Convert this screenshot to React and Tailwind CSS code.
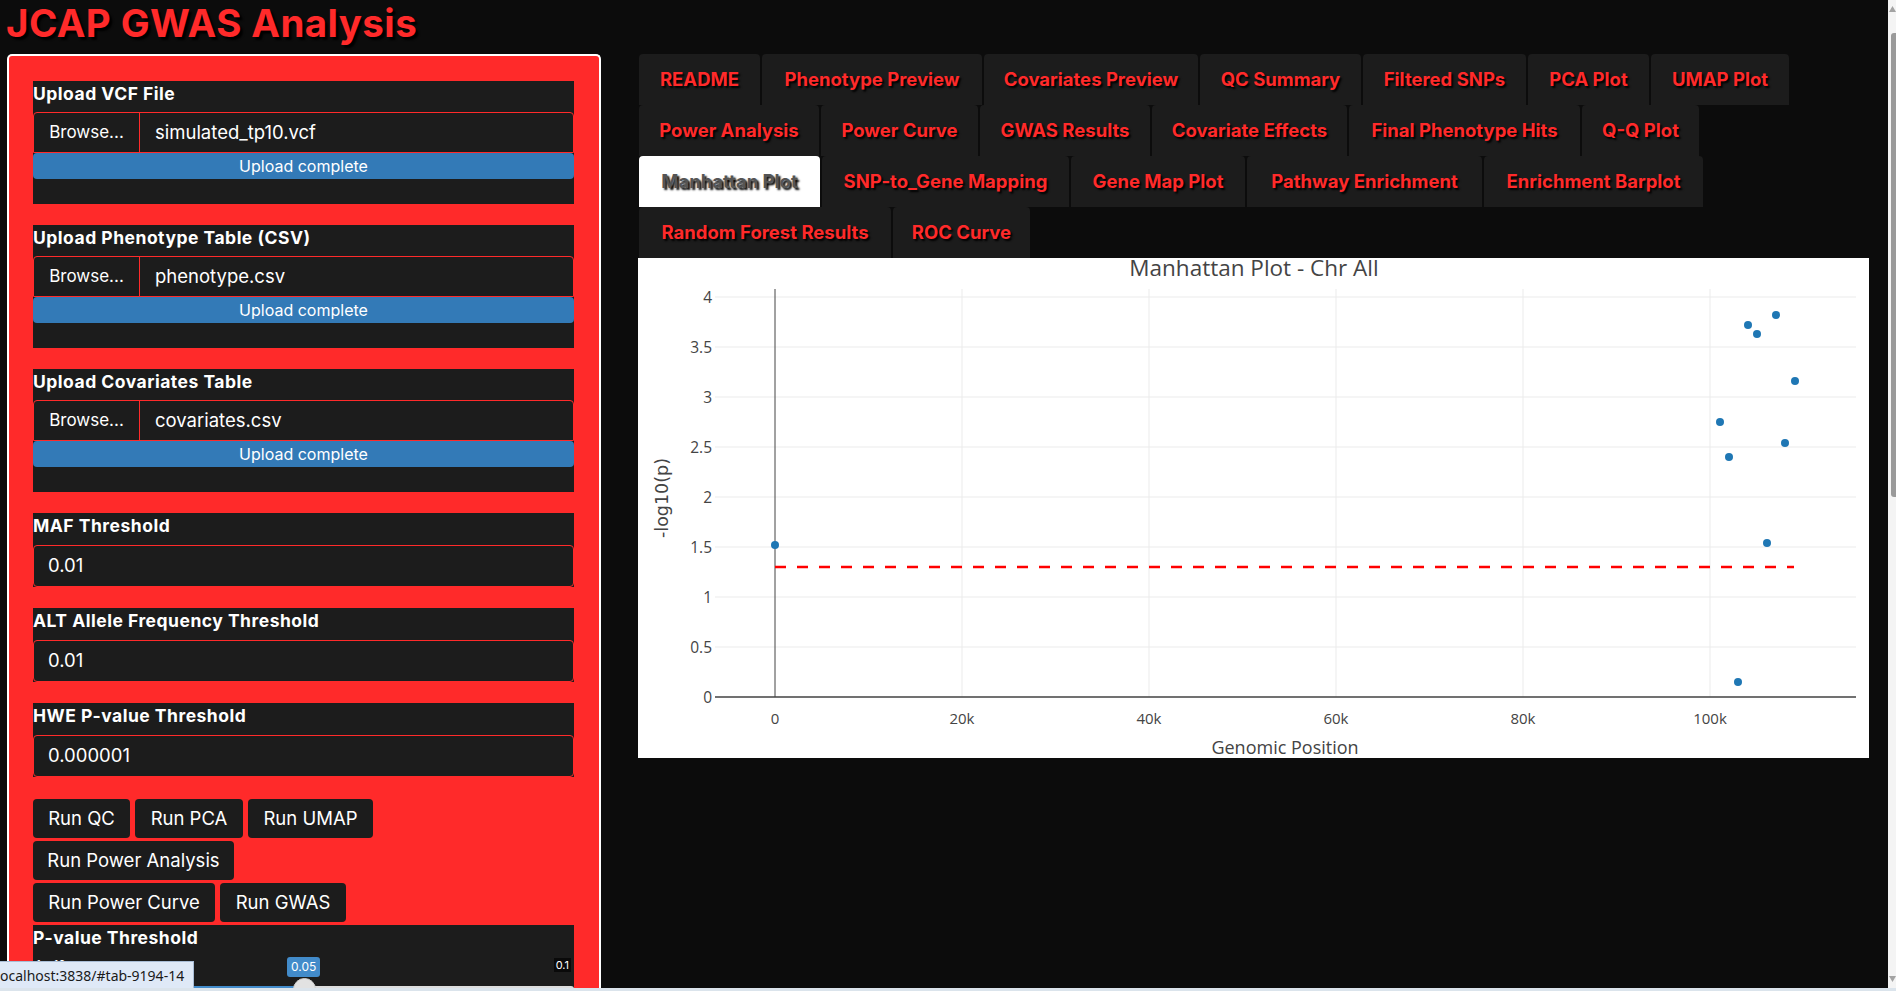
import React from 'react';

const uploads = [
  { label: 'Upload VCF File', file: 'simulated_tp10.vcf' },
  { label: 'Upload Phenotype Table (CSV)', file: 'phenotype.csv' },
  { label: 'Upload Covariates Table', file: 'covariates.csv' },
];

const thresholds = [
  { label: 'MAF Threshold', value: '0.01' },
  { label: 'ALT Allele Frequency Threshold', value: '0.01' },
  { label: 'HWE P-value Threshold', value: '0.000001' },
];

const buttonRows = [
  [['Run QC', 'w-[97px]'], ['Run PCA', 'w-[108px]'], ['Run UMAP', 'w-[125px]']],
  [['Run Power Analysis', 'w-[201px]']],
  [['Run Power Curve', 'w-[182px]'], ['Run GWAS', 'w-[126px]']],
];

const tabRows = [
  [['README', 'w-[121px]'], ['Phenotype Preview', 'w-[220px]'], ['Covariates Preview', 'w-[214px]'], ['QC Summary', 'w-[161px]'], ['Filtered SNPs', 'w-[163px]'], ['PCA Plot', 'w-[121px]'], ['UMAP Plot', 'w-[138px]']],
  [['Power Analysis', 'w-[180px]'], ['Power Curve', 'w-[157px]'], ['GWAS Results', 'w-[170px]'], ['Covariate Effects', 'w-[195px]'], ['Final Phenotype Hits', 'w-[231px]'], ['Q-Q Plot', 'w-[117px]']],
  [['Manhattan Plot', 'w-[181px]'], ['SNP-to_Gene Mapping', 'w-[247px]'], ['Gene Map Plot', 'w-[174px]'], ['Pathway Enrichment', 'w-[235px]'], ['Enrichment Barplot', 'w-[219px]']],
  [['Random Forest Results', 'w-[252px]'], ['ROC Curve', 'w-[137px]']],
];

// plot coords: x0 = 137 px at position 0, 187 px per 20k; y0 = 439 px at 0, 100 px per unit
const px = (k) => 137 + k * 9.35;
const py = (v) => 439 - v * 100;

const points = [
  [137, 287], [1110, 67], [1119, 76], [1138, 57], [1157, 123],
  [1082, 164], [1091, 199], [1147, 185], [1129, 285], [1100, 424],
];

const ManhattanPlot = () => {
  const yTicks = [0, 0.5, 1, 1.5, 2, 2.5, 3, 3.5, 4];
  const xTicks = [0, 20, 40, 60, 80, 100];
  const font = "'Open Sans', Verdana, Arial, sans-serif";
  return (
    <div className="w-[1231px] h-[500px] bg-white">
      <svg width="1231" height="500" viewBox="0 0 1231 500">
        {yTicks.map((v) => (
          <line key={'gy' + v} x1="77" x2="1218" y1={py(v)} y2={py(v)} stroke="#ebebeb" strokeWidth="1" />
        ))}
        {xTicks.slice(1).map((k) => (
          <line key={'gx' + k} x1={px(k)} x2={px(k)} y1="31" y2="439" stroke="#ebebeb" strokeWidth="1" />
        ))}
        <line x1="137" x2="137" y1="31" y2="439" stroke="#444" strokeWidth="1" />
        <line x1="77" x2="1218" y1="439" y2="439" stroke="#444" strokeWidth="1.5" />
        <line x1="137" x2="1156" y1={py(1.3)} y2={py(1.3)} stroke="#ff0000" strokeWidth="2.5" strokeDasharray="11 11" />
        {points.map(([x, y], i) => (
          <circle key={i} cx={x} cy={y} r="4" fill="#1f77b4" />
        ))}
        {yTicks.map((v) => (
          <text key={'ty' + v} x="74" y={py(v) + 5.5} textAnchor="end" fontFamily={font} fontSize="15.5" fill="#444">
            {v}
          </text>
        ))}
        {xTicks.map((k) => (
          <text key={'tx' + k} x={px(k)} y="466" textAnchor="middle" fontFamily={font} fontSize="15" fill="#444">
            {k === 0 ? '0' : k + 'k'}
          </text>
        ))}
        <text x="616" y="18" textAnchor="middle" fontFamily={font} fontSize="22.5" fill="#444">
          Manhattan Plot - Chr All
        </text>
        <text x="647" y="496" textAnchor="middle" fontFamily={font} fontSize="18" fill="#444">
          Genomic Position
        </text>
        <text x="0" y="0" transform="translate(30 240) rotate(-90)" textAnchor="middle" fontFamily="'DejaVu Sans', Verdana, sans-serif" fontSize="17.5" fill="#444">
          -log10(p)
        </text>
      </svg>
    </div>
  );
};

const Label = ({ children, gap = 'mb-[6px]' }) => (
  <div className={`h-[25px] leading-[25px] text-[17.5px] tracking-[0.5px] font-bold text-white whitespace-nowrap ${gap}`}>{children}</div>
);

const App = () => {
  return (
    <div className="relative h-[991px] overflow-hidden bg-[#0c0c0c] font-[Inter,sans-serif]">
      <div className="h-[54px] pl-[6px] pt-[3px]">
        <h1 className="text-[38.5px] leading-[40px] font-bold text-[#ff2a2a] tracking-[0.4px] [text-shadow:3px_3px_2px_#000]">
          JCAP GWAS Analysis
        </h1>
      </div>

      <div className="flex items-start">
        {/* Sidebar */}
        <aside className="ml-[7px] w-[594px] h-[960px] bg-[#ff2a2a] border-2 border-b-0 border-white rounded-t-[5px] pl-[24px] pr-[25px] pt-[25px] flex flex-col">
          <div className="flex flex-col gap-[21px]">
            {uploads.map((u) => (
              <div key={u.label} className="bg-[#1c1c1c] pb-[25px]">
                <Label>{u.label}</Label>
                <div className="flex h-[41px] border border-[#ff2a2a] rounded-t-[4px] text-white">
                  <div className="w-[106px] flex items-center justify-center border-r border-[#ff2a2a] text-[17px]">Browse...</div>
                  <div className="flex items-center pl-[15px] text-[18.5px]">{u.file}</div>
                </div>
                <div className="h-[26px] bg-[#337ab7] rounded-[4px] flex items-center justify-center text-white text-[16px]">
                  Upload complete
                </div>
              </div>
            ))}
            {thresholds.map((t) => (
              <div key={t.label} className="bg-[#1c1c1c]">
                <Label gap="mb-[7px]">{t.label}</Label>
                <div className="h-[42px] border border-[#ff2a2a] rounded-[4px] flex items-center pl-[14px] text-white text-[18.5px]">
                  {t.value}
                </div>
              </div>
            ))}
          </div>

          <div className="mt-[22px] flex flex-col gap-[3px]">
            {buttonRows.map((row, i) => (
              <div key={i} className="flex gap-[5px]">
                {row.map(([name, w]) => (
                  <button key={name} className={`${w} h-[39px] bg-[#1c1c1c] rounded-[4px] text-white text-[18.5px] whitespace-nowrap`}>
                    {name}
                  </button>
                ))}
              </div>
            ))}
          </div>

          <div className="mt-[3px] bg-[#1c1c1c] h-[80px]">
            <Label gap="mb-0">P-value Threshold</Label>
            <div className="relative h-[55px]">
              <span className="absolute left-[3px] top-[6px] text-[12px] text-white">1e-10</span>
              <span className="absolute left-[254px] top-[7px] h-[20px] px-[4px] bg-[#428bca] rounded-[3px] text-white text-[12px] leading-[20px]">0.05</span>
              <span className="absolute right-[3px] top-[8px] px-[2px] bg-[#0a0a0a] text-white text-[11px] leading-[14px]">0.1</span>
              <div className="absolute left-0 right-0 top-[36px] h-[6px] rounded-[3px] bg-[#dddddd]" />
              <div className="absolute left-0 w-[272px] top-[36px] h-[6px] rounded-l-[3px] bg-[#428bca]" />
              <div className="absolute left-[260px] top-[28px] w-[23px] h-[23px] rounded-full bg-[#e2e2e2] border border-[#cfcfcf]" />
            </div>
          </div>
        </aside>

        {/* Main panel */}
        <main className="ml-[37px] w-[1231px]">
          <div className="flex flex-col">
            {tabRows.map((row, i) => (
              <div key={i} className="flex gap-[2px] pl-[1px]">
                {row.map(([name, w]) => {
                  const active = name === 'Manhattan Plot';
                  return (
                    <div
                      key={name}
                      className={`${w} h-[51px] rounded-t-[4px] flex items-center justify-center text-[18.5px] font-bold whitespace-nowrap [text-shadow:2px_2px_2px_#000] ${
                        active ? 'bg-white text-[#555]' : 'bg-[#1c1c1c] text-[#ff2a2a]'
                      }`}
                    >
                      {name}
                    </div>
                  );
                })}
              </div>
            ))}
          </div>
          <ManhattanPlot />
        </main>
      </div>

      {/* browser status bubble */}
      <div className="absolute left-0 top-[961px] w-[194px] h-[27px] bg-[#dfe9f7] border-t border-r border-[#a9bdd6] flex items-center text-[14px] text-[#1a1a1a] font-['Noto_Sans',sans-serif] whitespace-nowrap overflow-hidden">
        ocalhost:3838/#tab-9194-14
      </div>
      <div className="absolute left-0 right-0 bottom-0 h-[3px] bg-[#dbe4ec]" />

      {/* vertical scrollbar */}
      <div className="absolute top-0 right-0 w-[8px] h-[988px] bg-[#f4f4f4]">
        <svg className="absolute top-[5px] left-[1px]" width="7" height="8" viewBox="0 0 7 8">
          <path d="M0 7 L3.5 1 L7 7 Z" fill="#a3a3a3" />
        </svg>
        <div className="absolute top-[33px] left-[3px] w-[5px] h-[464px] rounded-l-[3px] bg-[#9a9a9a]" />
        <svg className="absolute top-[975px] left-[1px]" width="7" height="8" viewBox="0 0 7 8">
          <path d="M0 1 L3.5 7 L7 1 Z" fill="#a3a3a3" />
        </svg>
      </div>
    </div>
  );
};

export default App;
